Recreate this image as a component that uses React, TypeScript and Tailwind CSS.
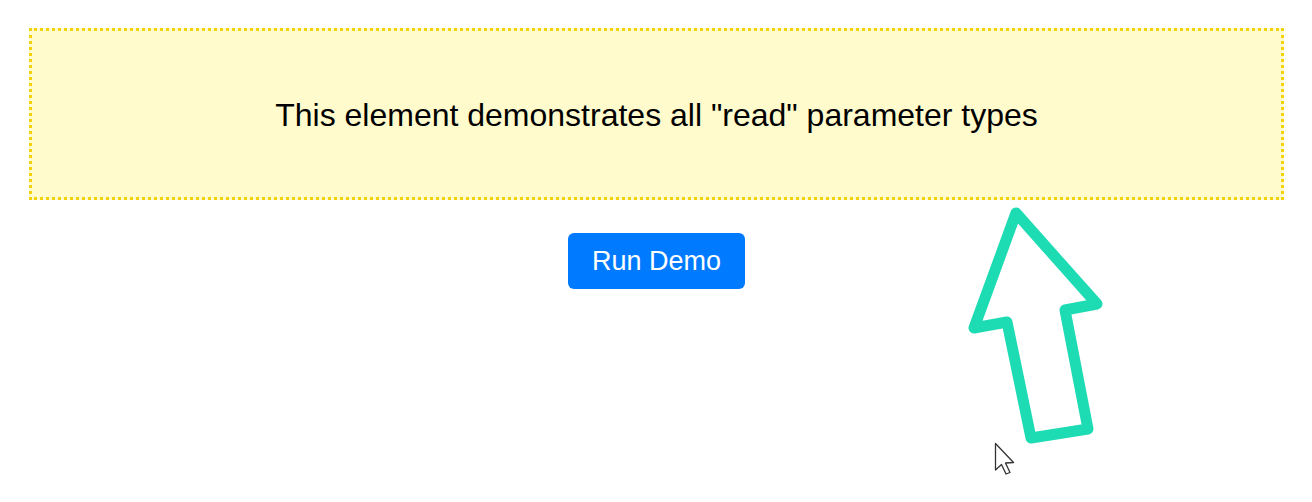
export default function App() {
  return (
    <div className="relative w-full h-[502px] bg-white overflow-hidden" style={{ fontFamily: '"Liberation Sans", Arial, sans-serif' }}>
      <div className="pt-[28px] px-[28px] pl-[29px] flex flex-col items-center">
        {/* Demo element */}
        <div className="w-full h-[172px] border-[3px] border-dotted border-[#f2d20c] bg-[#fffbcc] flex items-center justify-center">
          <p className="text-[32px] text-black leading-none mt-[2px]">This element demonstrates all "read" parameter types</p>
        </div>

        <button className="mt-[33px] w-[177px] h-[56px] rounded-[6px] bg-[#007bff] text-white text-[27px] leading-none flex items-center justify-center">
          Run Demo
        </button>
      </div>

      {/* annotation arrow */}
      <svg className="absolute left-0 top-0 pointer-events-none" width="1312" height="502" viewBox="0 0 1312 502">
        <polygon
          points="1016,213 1097,304 1065,310 1088,429 1031,438 1007,322 974,328"
          fill="none"
          stroke="#1ddbb2"
          strokeWidth="11"
          strokeLinejoin="round"
        />
        {/* mouse cursor */}
        <path
          d="M995.5,443.5 L995.5,470 L1001.5,464.5 L1006,474 L1010,472.5 L1005.5,463 L1013.5,462.5 Z"
          fill="#ffffff"
          stroke="#333333"
          strokeWidth="1.3"
          strokeLinejoin="round"
        />
      </svg>
    </div>
  );
}
